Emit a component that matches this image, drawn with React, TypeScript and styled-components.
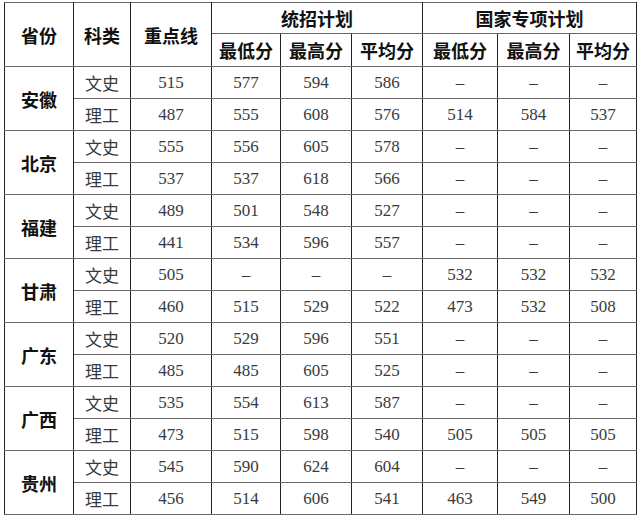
import styled, { createGlobalStyle } from "styled-components";

const GlobalStyle = createGlobalStyle`
  html, body {
    margin: 0;
    padding: 0;
    background: #fff;
  }
`;

type Row = { kind: string; cells: string[] };
type Province = { name: string; rows: Row[] };

const D = "–";

const data: Province[] = [
  {
    name: "安徽",
    rows: [
      { kind: "文史", cells: ["515", "577", "594", "586", D, D, D] },
      { kind: "理工", cells: ["487", "555", "608", "576", "514", "584", "537"] },
    ],
  },
  {
    name: "北京",
    rows: [
      { kind: "文史", cells: ["555", "556", "605", "578", D, D, D] },
      { kind: "理工", cells: ["537", "537", "618", "566", D, D, D] },
    ],
  },
  {
    name: "福建",
    rows: [
      { kind: "文史", cells: ["489", "501", "548", "527", D, D, D] },
      { kind: "理工", cells: ["441", "534", "596", "557", D, D, D] },
    ],
  },
  {
    name: "甘肃",
    rows: [
      { kind: "文史", cells: ["505", D, D, D, "532", "532", "532"] },
      { kind: "理工", cells: ["460", "515", "529", "522", "473", "532", "508"] },
    ],
  },
  {
    name: "广东",
    rows: [
      { kind: "文史", cells: ["520", "529", "596", "551", D, D, D] },
      { kind: "理工", cells: ["485", "485", "605", "525", D, D, D] },
    ],
  },
  {
    name: "广西",
    rows: [
      { kind: "文史", cells: ["535", "554", "613", "587", D, D, D] },
      { kind: "理工", cells: ["473", "515", "598", "540", "505", "505", "505"] },
    ],
  },
  {
    name: "贵州",
    rows: [
      { kind: "文史", cells: ["545", "590", "624", "604", D, D, D] },
      { kind: "理工", cells: ["456", "514", "606", "541", "463", "549", "500"] },
    ],
  },
];

const widths = [69, 57, 81, 69, 71, 71, 75, 72, 67];

const Page = styled.div`
  padding: 2px 0 0 4px;
  background: #fff;
`;

const Table = styled.table`
  border-collapse: collapse;
  table-layout: fixed;
  width: 632px;
  border: 1.5px solid #333;
`;

const HeadRow = styled.tr<{ $h: number }>`
  height: ${(p) => p.$h}px;
`;

const BodyRow = styled.tr`
  height: 32px;
`;

const Th = styled.th`
  font-family: "Noto Sans CJK SC", "Noto Sans", sans-serif;
  font-weight: 700;
  font-size: 18px;
  color: #111;
  text-align: center;
  vertical-align: middle;
  padding: 0;
  line-height: 1;
  border-left: 1.5px solid #222;
  border-right: 1.5px solid #222;
  border-top: 1.5px solid #666;
  border-bottom: 1.5px solid #666;
`;

const Cell = styled.td<{ $kind?: "prov" | "kind" | "num" }>`
  font-family: ${(p) =>
    p.$kind === "num"
      ? `"Liberation Serif", "DejaVu Serif", serif`
      : `"Noto Sans CJK SC", "Noto Sans", sans-serif`};
  font-weight: ${(p) => (p.$kind === "prov" ? 700 : 400)};
  font-size: ${(p) => (p.$kind === "prov" ? "18px" : "17px")};
  color: ${(p) => (p.$kind === "prov" ? "#111" : "#3a3a3a")};
  text-align: center;
  vertical-align: middle;
  padding: 0;
  line-height: 1;
  border-left: 1.5px solid #222;
  border-right: 1.5px solid #222;
  border-top: 1.5px solid #666;
  border-bottom: 1.5px solid #666;
`;

export default function App() {
  return (
    <>
      <GlobalStyle />
      <Page>
        <Table>
          <colgroup>
            {widths.map((w, i) => (
              <col key={i} style={{ width: w }} />
            ))}
          </colgroup>
          <thead>
            <HeadRow $h={31}>
              <Th rowSpan={2}>省份</Th>
              <Th rowSpan={2}>科类</Th>
              <Th rowSpan={2}>重点线</Th>
              <Th colSpan={3}>统招计划</Th>
              <Th colSpan={3}>国家专项计划</Th>
            </HeadRow>
            <HeadRow $h={33}>
              <Th>最低分</Th>
              <Th>最高分</Th>
              <Th>平均分</Th>
              <Th>最低分</Th>
              <Th>最高分</Th>
              <Th>平均分</Th>
            </HeadRow>
          </thead>
          <tbody>
            {data.map((p) =>
              p.rows.map((r, ri) => (
                <BodyRow key={p.name + r.kind}>
                  {ri === 0 && (
                    <Cell $kind="prov" rowSpan={p.rows.length}>
                      {p.name}
                    </Cell>
                  )}
                  <Cell $kind="kind">{r.kind}</Cell>
                  {r.cells.map((c, ci) => (
                    <Cell $kind="num" key={ci}>
                      {c}
                    </Cell>
                  ))}
                </BodyRow>
              ))
            )}
          </tbody>
        </Table>
      </Page>
    </>
  );
}
